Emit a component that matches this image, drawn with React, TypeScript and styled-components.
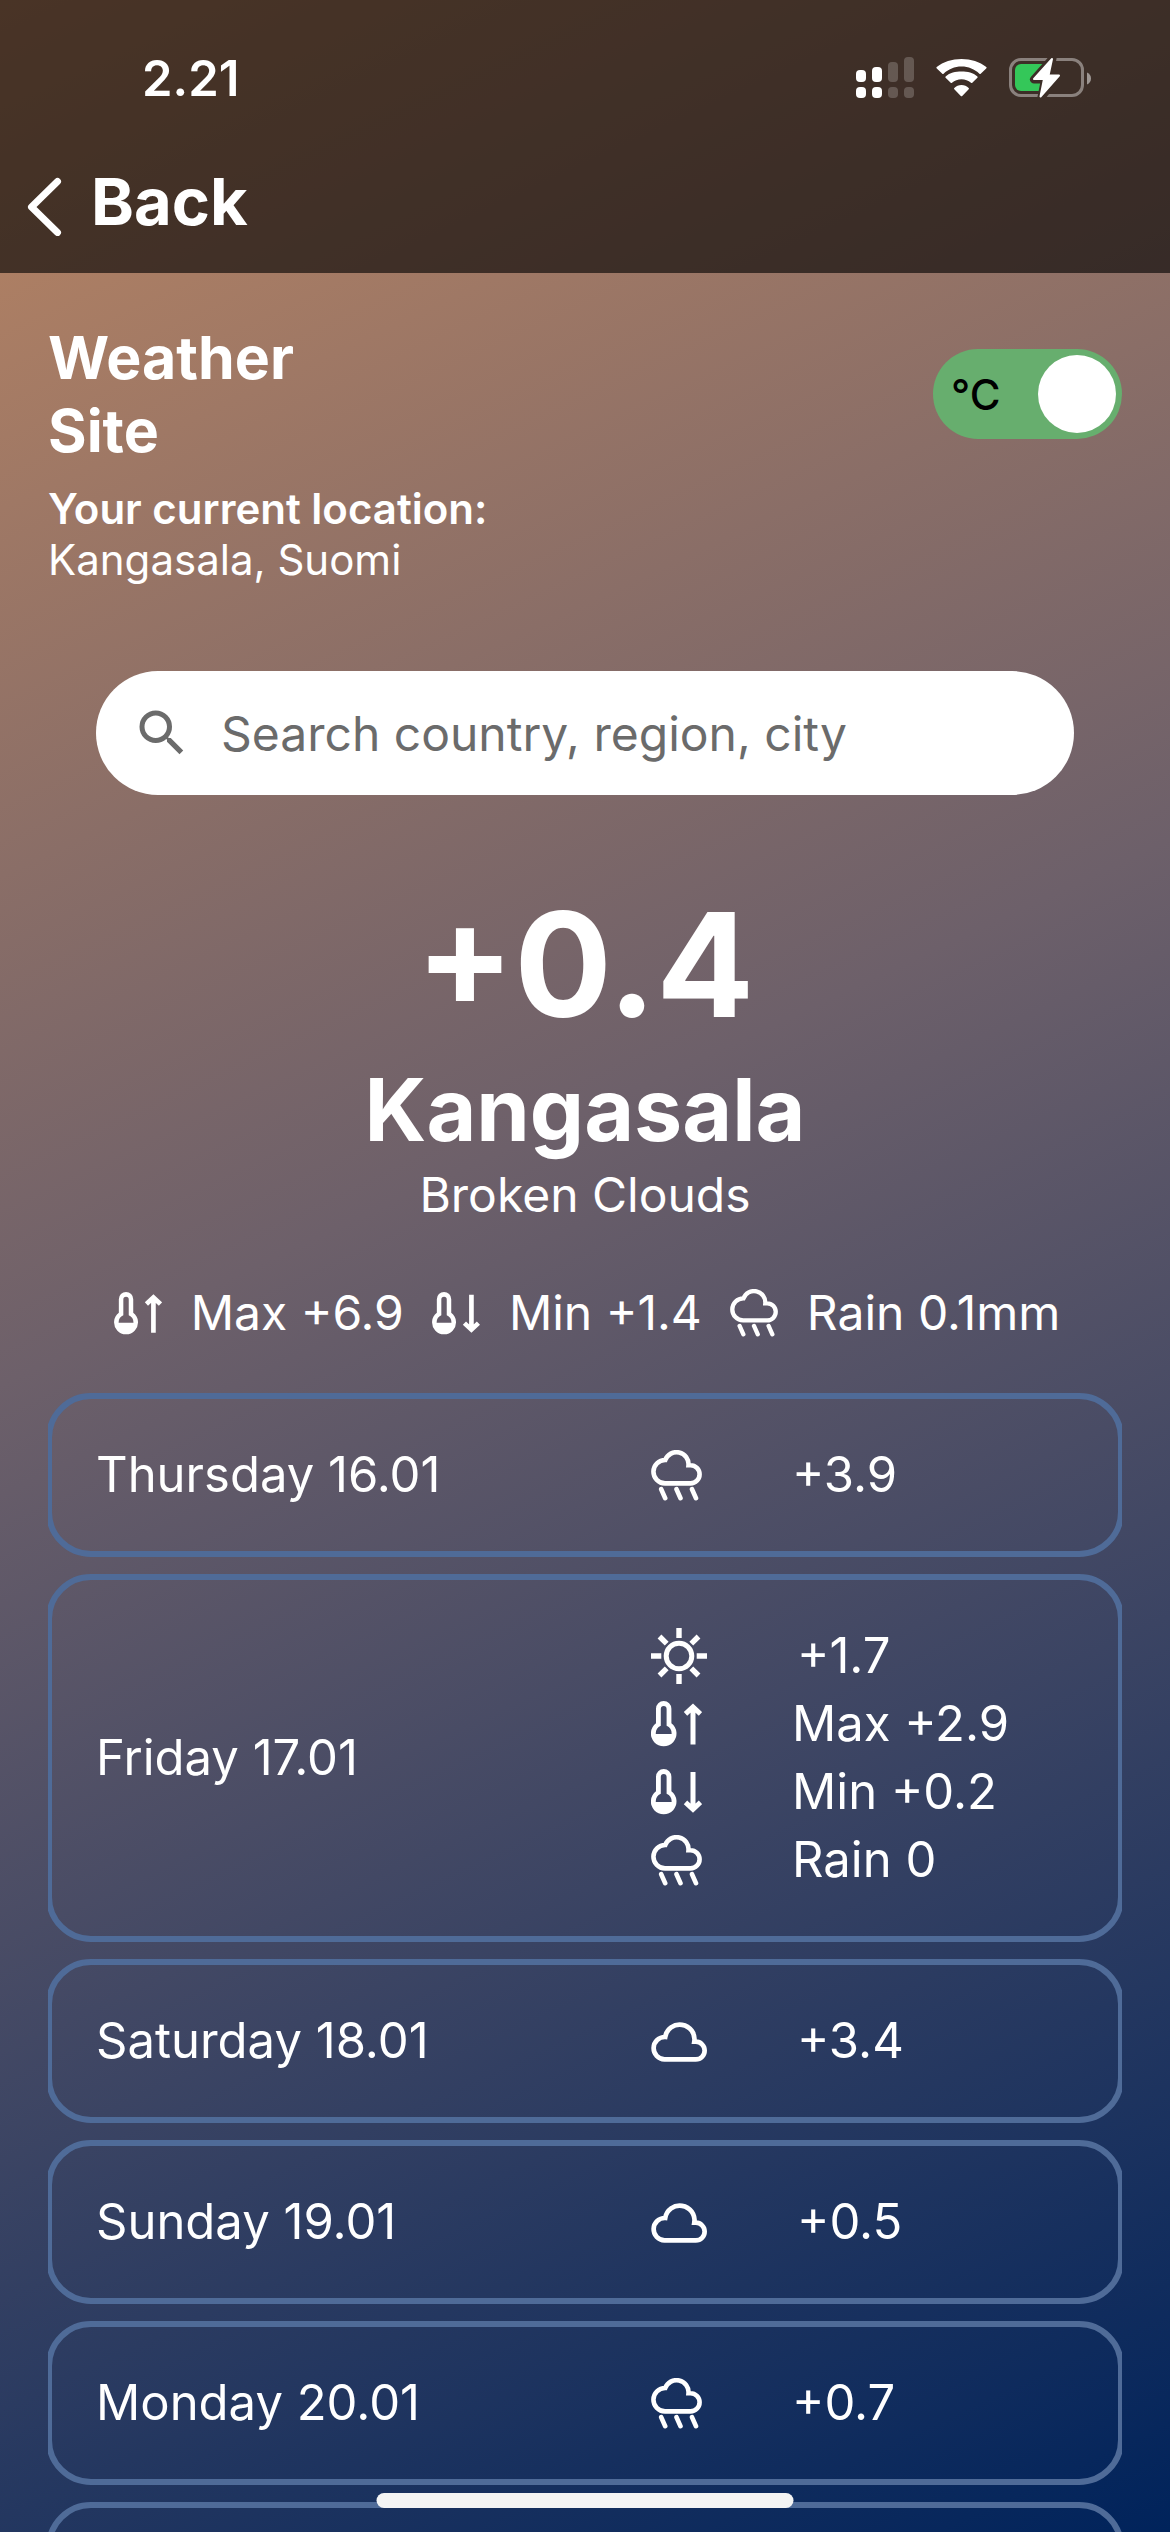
import React, { useState } from 'react';
import styled, { createGlobalStyle } from 'styled-components';

const GlobalStyle = createGlobalStyle`
  *, *::before, *::after { box-sizing: border-box; }
  html, body { margin: 0; background: #00235b; }
  body { font-family: Inter, "Liberation Sans", sans-serif; color: #fff; }
  h1, h2, p, ul { margin: 0; padding: 0; }
  button, input { font: inherit; color: inherit; }
`;

const Screen = styled.div`
  position: relative;
  display: flex;
  flex-direction: column;
  height: 100vh;
  overflow: hidden;
  background: linear-gradient(155deg, #bc8662 0%, #6d606a 45%, #00235b 100%);
`;

const Header = styled.header`
  flex: none;
  background: rgba(0, 0, 0, 0.61);
`;

const StatusBar = styled.div`
  display: flex;
  align-items: center;
  justify-content: space-between;
  height: 156px;
  padding: 0 78px 0 142px;
`;

const Clock = styled.time`
  font-size: 49px;
  font-weight: 600;
`;

const StatusIcons = styled.div`
  display: flex;
  align-items: center;
  gap: 22px;
`;

const NavBar = styled.nav`
  height: 117px;
  padding-left: 26px;
`;

const BackButton = styled.button`
  display: flex;
  align-items: center;
  gap: 29px;
  height: 90px;
  padding: 0;
  border: 0;
  background: none;
  font-size: 65px;
  font-weight: 700;
  cursor: pointer;
`;

const Main = styled.main`
  flex: 1;
  min-height: 0;
  padding: 48px 48px 0;
  overflow: hidden auto;
  scrollbar-width: none;
`;

const TitleRow = styled.div`
  display: flex;
  align-items: center;
  justify-content: space-between;
`;

const Title = styled.h1`
  width: min-content;
  font-size: 59px;
  font-weight: 700;
  line-height: 73px;
`;

const Location = styled.div`
  margin-top: 16px;
  font-size: 42px;
  line-height: 51px;
`;

const LocationLabel = styled.p`
  font-weight: 600;
`;

const UnitSwitch = styled.label`
  display: flex;
  align-items: center;
  justify-content: space-between;
  width: 189px;
  height: 90px;
  padding: 0 6px 0 18px;
  border-radius: 45px;
  background: #67ae6e;
  color: #000;
  font-size: 42px;
  font-weight: 500;
  cursor: pointer;
`;

const UnitInput = styled.input`
  appearance: none;
  width: 78px;
  height: 78px;
  margin: 0;
  border-radius: 50%;
  background: #fff;
  cursor: pointer;
`;

const SearchBar = styled.label`
  display: flex;
  align-items: center;
  gap: 29px;
  height: 124px;
  margin: 86px 48px 0;
  padding: 0 36px;
  border-radius: 62px;
  background: #fff;
  color: #6b6b6b;
`;

const SearchInput = styled.input`
  flex: 1;
  min-width: 0;
  padding: 0;
  border: 0;
  outline: 0;
  background: none;
  font-size: 48px;
  &::placeholder { color: #6b6b6b; opacity: 1; }
`;

const Current = styled.section`
  margin-top: 79px;
  text-align: center;
`;

const Temperature = styled.p`
  font-size: 145px;
  font-weight: 700;
  line-height: 182px;
`;

const City = styled.h2`
  font-size: 86px;
  font-weight: 700;
  line-height: 109px;
`;

const Condition = styled.p`
  font-size: 48px;
  line-height: 60px;
`;

const Stats = styled.ul`
  display: flex;
  justify-content: center;
  gap: 28px;
  margin-top: 58px;
  padding-left: 4px;
  list-style: none;
  font-size: 48px;
  line-height: 60px;
  white-space: nowrap;
`;

const Stat = styled.li`
  display: flex;
  align-items: center;
  gap: 29px;
`;

const Days = styled.ul`
  display: flex;
  flex-direction: column;
  gap: 17px;
  margin-top: 50px;
  list-style: none;
`;

const Day = styled.li`
  overflow: hidden;
`;

const DayCard = styled.button`
  display: flex;
  align-items: center;
  width: calc(100% + 4px);
  min-height: 164px;
  margin: 0 -2px;
  padding: 42px 44px;
  border: 6px solid #4f6b98;
  border-radius: 45px;
  background: none;
  font-size: 49px;
  line-height: 68px;
  text-align: left;
  cursor: pointer;
`;

const DayName = styled.span`
  flex: 1;
`;

const Readings = styled.span`
  width: 423px;
`;

const Reading = styled.span`
  display: flex;
  align-items: center;
  gap: 90px;
  height: 68px;
`;

const HomeIndicator = styled.div`
  position: absolute;
  bottom: 24px;
  left: 50%;
  width: 417px;
  height: 15px;
  border-radius: 8px;
  background: #f4f4f4;
  transform: translateX(-50%);
`;

const Glyph = styled.svg`
  display: block;
  flex: none;
`;

function SignalIcon() {
  return (
    <Glyph width="58" height="42" viewBox="0 0 58 42" fill="#fff" aria-hidden="true">
      <rect x="0" y="13" width="10" height="12" rx="4" />
      <rect x="16" y="10" width="10" height="15" rx="4" />
      <g opacity="0.2">
        <rect x="32" y="5" width="10" height="20" rx="4" />
        <rect x="48" y="0" width="10" height="25" rx="4" />
        <rect x="32" y="30" width="10" height="11" rx="4" />
        <rect x="48" y="30" width="10" height="11" rx="4" />
      </g>
      <rect x="0" y="30" width="10" height="11" rx="4" />
      <rect x="16" y="30" width="10" height="11" rx="4" />
    </Glyph>
  );
}

function WifiIcon() {
  return (
    <Glyph width="51" height="38" viewBox="0 0 51 38" fill="#fff" aria-hidden="true">
      <path d="M25.5 7.6c6.9 0 13.200 2.700 17.900 7.100.4.400 1 .400 1.300 0l5.500-5.300c.5-.4.500-1 .100-1.400C43.700 2.700 35 0 25.500 0S7.300 2.700.7 8c-.4.400-.4 1 .100 1.400l5.500 5.300c.4.400.9.400 1.300 0C12.300 10.300 18.600 7.600 25.500 7.600z" />
      <path d="M25.500 20.200c3.600 0 6.900 1.300 9.500 3.600.4.300 1 .3 1.300 0l5.100-5c.4-.4.400-1 0-1.400-4.200-3.900-9.800-5-15.900-5s-11.700 1.100-15.900 5c-.4.4-.4 1 0 1.400l5.100 5c.3.300.9.300 1.300 0 2.600-2.300 5.900-3.600 9.500-3.600z" />
      <path d="M32.700 30.200c.4-.4.400-1 0-1.300-1.900-1.600-4.400-2.900-7.200-2.900s-5.300 1.300-7.200 2.900c-.4.300-.4.900 0 1.300l6.500 6.800c.4.400 1 .400 1.400 0z" />
    </Glyph>
  );
}

function BatteryIcon() {
  return (
    <Glyph width="83" height="42" viewBox="0 0 83 42" aria-hidden="true">
      <defs>
        <mask id="boltGap">
          <rect width="83" height="42" fill="#fff" />
          <path d="M43.500 1.500 25 22.500h11L32.500 40 50 18.500H40z" fill="#000" stroke="#000" strokeWidth="8" strokeLinejoin="round" />
        </mask>
      </defs>
      <g mask="url(#boltGap)">
        <rect x="1.500" y="2.500" width="72" height="36" rx="10.500" fill="none" stroke="#fff" strokeOpacity="0.4" strokeWidth="3" />
        <rect x="6" y="7" width="35" height="27" rx="6" fill="#34c759" />
      </g>
      <path d="M78 15.500v12c2.600-1 4-3.400 4-6s-1.400-5-4-6z" fill="#fff" opacity="0.5" />
      <path d="M43 2 25 22h10L31.500 39.500 50 18.500H39.500z" fill="#fff" stroke="#fff" strokeWidth="2" strokeLinejoin="round" />
    </Glyph>
  );
}

function BackIcon() {
  return (
    <Glyph width="36" height="70" viewBox="0 0 36 70" aria-hidden="true">
      <path d="M31.500 15.500 5.500 41l26 25.500" fill="none" stroke="#fff" strokeWidth="7" strokeLinecap="round" strokeLinejoin="round" />
    </Glyph>
  );
}

function SearchIcon() {
  return (
    <Glyph width="60" height="60" viewBox="0 0 24 24" fill="currentColor" aria-hidden="true">
      <path d="M15.500 14h-.79l-.28-.27A6.471 6.471 0 0 0 16 9.500 6.500 6.500 0 1 0 9.500 16c1.610 0 3.090-.59 4.230-1.570l.27.28v.79l5 4.990L20.490 19l-4.990-5zm-6 0C7.010 14 5 11.990 5 9.500S7.010 5 9.500 5 14 7.010 14 9.500 11.990 14 9.500 14z" />
    </Glyph>
  );
}

function RainIcon({ size }: { size: number }) {
  return (
    <Glyph width={size} height={size} viewBox="0 0 51 51" fill="none" stroke="#fff" strokeWidth="4.600" aria-hidden="true">
      <path d="M14 33.400A11.700 11.700 0 0 1 14.300 10 12 12 0 0 1 37.500 15.200h2a9.100 9.100 0 0 1 0 18.200z" />
      <path d="M10.200 39.200l4 9M25.500 39.200l4 9M41 39.200l4 9" strokeLinecap="round" />
    </Glyph>
  );
}

function CloudIcon() {
  return (
    <Glyph width="56" height="41" viewBox="0 0 56 41" fill="none" stroke="#fff" strokeWidth="4.700" aria-hidden="true">
      <path d="M13.500 38.400a11.200 11.200 0 0 1 .700-22.400A14.600 14.600 0 0 1 43.300 20.700h1.500a8.850 8.850 0 0 1 0 17.700z" />
    </Glyph>
  );
}

function SunIcon() {
  return (
    <Glyph width="56" height="56" viewBox="0 0 56 56" fill="none" stroke="#fff" strokeWidth="5.400" aria-hidden="true">
      <circle cx="28" cy="28" r="12.800" strokeWidth="5" />
      <path d="M28 0v10M28 46v10M0 28h10.300M45.700 28H56M8.500 8.500l7.200 7.200M40.300 40.300l7.200 7.200M47.500 8.500l-7.200 7.200M15.700 40.300l-7.200 7.200" />
    </Glyph>
  );
}

function ThermometerIcon({ size, direction }: { size: number; direction: 'up' | 'down' }) {
  return (
    <Glyph width={size} height={Math.round((size * 46) / 51)} viewBox="0 0 51 46" aria-hidden="true">
      <path
        fill="#fff"
        fillRule="evenodd"
        d="M5 7.700a7.700 7.700 0 0 1 15.400 0V22.300a12.800 12.800 0 1 1-15.400 0zM9.800 7.900V24.800A8.500 8.500 0 0 0 4.800 33H20.600A8.500 8.500 0 0 0 15.600 24.800V7.900a2.900 2.900 0 0 0-5.800 0z"
      />
      <path
        d={direction === 'up' ? 'M42 43.500V7M34.500 12.900l7.500-7 7.500 7' : 'M42 3v36M34.500 33.300l7.500 7 7.500-7'}
        fill="none"
        stroke="#fff"
        strokeWidth="5"
      />
    </Glyph>
  );
}

type Sky = 'rain' | 'sun' | 'cloud';

interface Forecast {
  day: string;
  sky: Sky;
  temp: string;
  max?: string;
  min?: string;
  rain?: string;
}

const forecasts: Forecast[] = [
  { day: 'Thursday 16.01', sky: 'rain', temp: '+3.9' },
  { day: 'Friday 17.01', sky: 'sun', temp: '+1.7', max: '+2.9', min: '+0.2', rain: '0' },
  { day: 'Saturday 18.01', sky: 'cloud', temp: '+3.4' },
  { day: 'Sunday 19.01', sky: 'cloud', temp: '+0.5' },
  { day: 'Monday 20.01', sky: 'rain', temp: '+0.7' },
];

function SkyIcon({ sky }: { sky: Sky }) {
  if (sky === 'sun') return <SunIcon />;
  if (sky === 'cloud') return <CloudIcon />;
  return <RainIcon size={51} />;
}

export default function App() {
  const [openDay, setOpenDay] = useState('Friday 17.01');
  const [query, setQuery] = useState('');

  return (
    <>
      <GlobalStyle />
      <Screen>
        <Header>
          <StatusBar>
            <Clock>2.21</Clock>
            <StatusIcons>
              <SignalIcon />
              <WifiIcon />
              <BatteryIcon />
            </StatusIcons>
          </StatusBar>
          <NavBar>
            <BackButton type="button">
              <BackIcon />
              Back
            </BackButton>
          </NavBar>
        </Header>
        <Main>
          <TitleRow>
            <Title>Weather Site</Title>
            <UnitSwitch>
              °C
              <UnitInput type="checkbox" role="switch" defaultChecked />
            </UnitSwitch>
          </TitleRow>
          <Location>
            <LocationLabel>Your current location:</LocationLabel>
            <p>Kangasala, Suomi</p>
          </Location>
          <SearchBar>
            <SearchIcon />
            <SearchInput
              type="text"
              placeholder="Search country, region, city"
              value={query}
              onChange={(event) => setQuery(event.target.value)}
            />
          </SearchBar>
          <Current>
            <Temperature>+0.4</Temperature>
            <City>Kangasala</City>
            <Condition>Broken Clouds</Condition>
          </Current>
          <Stats>
            <Stat>
              <ThermometerIcon size={48} direction="up" />
              Max +6.9
            </Stat>
            <Stat>
              <ThermometerIcon size={48} direction="down" />
              Min +1.4
            </Stat>
            <Stat>
              <RainIcon size={48} />
              Rain 0.1mm
            </Stat>
          </Stats>
          <Days>
            {forecasts.map((item) => {
              const open = item.day === openDay && item.max !== undefined;
              return (
                <Day key={item.day}>
                  <DayCard type="button" aria-expanded={open} onClick={() => setOpenDay(open ? '' : item.day)}>
                    <DayName>{item.day}</DayName>
                    <Readings>
                      <Reading>
                        <SkyIcon sky={item.sky} />
                        {item.temp}
                      </Reading>
                      {open && (
                        <>
                          <Reading>
                            <ThermometerIcon size={51} direction="up" />
                            Max {item.max}
                          </Reading>
                          <Reading>
                            <ThermometerIcon size={51} direction="down" />
                            Min {item.min}
                          </Reading>
                          <Reading>
                            <RainIcon size={51} />
                            Rain {item.rain}
                          </Reading>
                        </>
                      )}
                    </Readings>
                  </DayCard>
                </Day>
              );
            })}
            <Day>
              <DayCard as="div" />
            </Day>
          </Days>
        </Main>
        <HomeIndicator />
      </Screen>
    </>
  );
}
